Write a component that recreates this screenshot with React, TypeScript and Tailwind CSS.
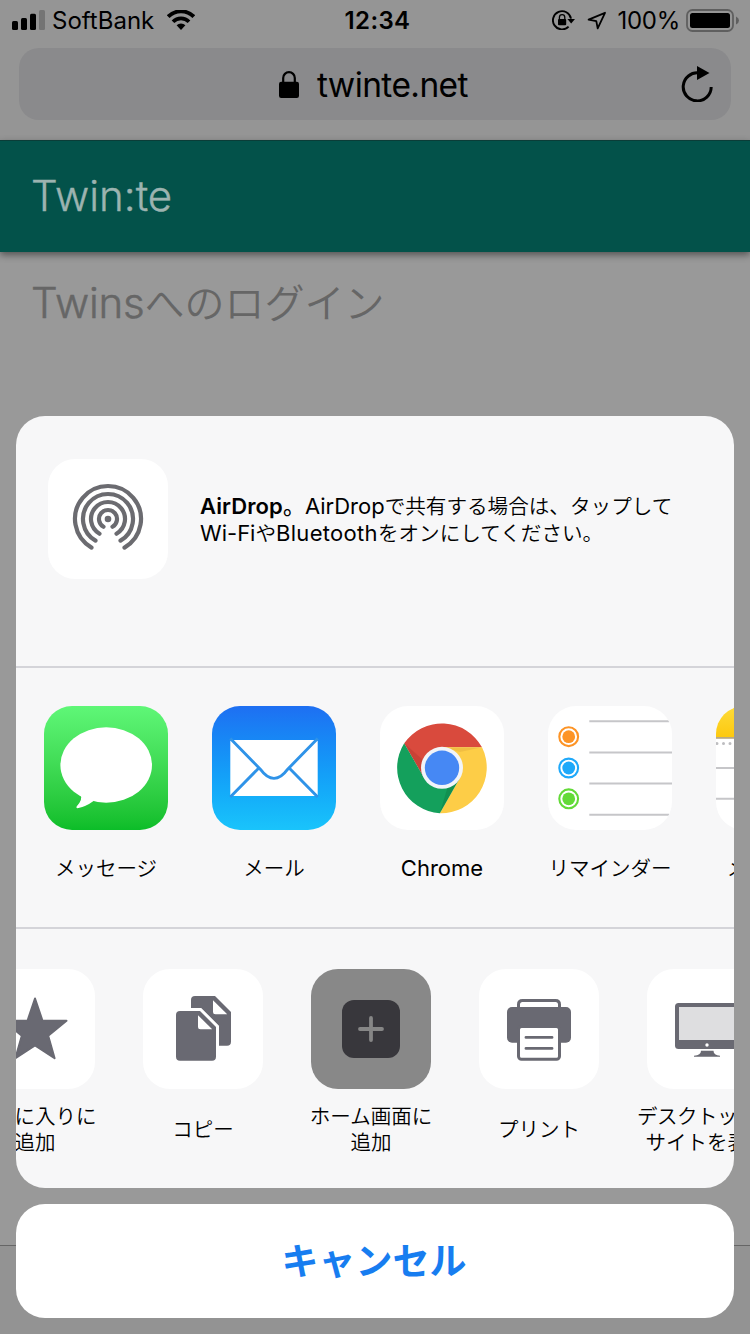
import type { ReactNode } from "react";

const ICON = "#696972";

function StatusBar() {
  return (
    <div className="flex h-10 items-center justify-between">
      <div className="flex w-[250px] items-center">
        <svg className="ml-3 h-5 w-[33px]" viewBox="0 0 33 20">
          <rect x="0" y="11" width="6" height="9" rx="1.5" />
          <rect x="9" y="8" width="6" height="12" rx="1.5" />
          <rect x="18" y="3.7" width="6" height="16.3" rx="1.5" />
          <rect x="27" y="0" width="6" height="20" rx="1.5" fill="#747474" />
        </svg>
        <span className="ml-[7px] pt-[2px] text-[24px] leading-10">SoftBank</span>
        <svg className="ml-[13px] h-5 w-7" viewBox="0 0 28 20">
          <path d="M1.2 6.6 A18 18 0 0 1 26.8 6.6" fill="none" stroke="#000" strokeWidth="3.8" />
          <path d="M6 11.8 A11.2 11.2 0 0 1 22 11.8" fill="none" stroke="#000" strokeWidth="3.7" />
          <path d="M9.6 15.2 A6.4 6.4 0 0 1 18.4 15.2 L14 20 Z" />
        </svg>
      </div>
      <span className="pt-[2px] pl-[5px] text-[24px] leading-10 font-semibold tracking-[0.4px]">12:34</span>
      <div className="flex w-[250px] items-center justify-end">
        <svg className="h-5 w-[23px]" viewBox="0 0 23 20">
          <path d="M16.6 16.6 A9.1 9.1 0 1 1 19 8.6" fill="none" stroke="#000" strokeWidth="1.9" />
          <path d="M15.4 9 H23 L19.2 13.4 Z" />
          <rect x="6" y="9" width="8.2" height="6.2" rx="1" />
          <path d="M7.4 9.5 V7.4 A2.7 2.7 0 0 1 12.8 7.4 V9.5" fill="none" stroke="#000" strokeWidth="1.3" />
        </svg>
        <svg className="ml-3 h-5 w-5" viewBox="0 0 20 20">
          <path d="M1.6 9.6 L18 2.8 L10.7 18.4 L9.3 11.2 Z" fill="none" stroke="#000" strokeWidth="1.8" strokeLinejoin="round" />
        </svg>
        <span className="ml-[11px] pt-[2px] text-[24px] leading-10 tracking-[-0.3px]">100%</span>
        <svg className="mr-[11px] ml-[6px] h-[23px] w-[53px]" viewBox="0 0 53 23">
          <rect x="1" y="1" width="46" height="21" rx="5.5" fill="none" stroke="#5f5f5f" strokeWidth="1.8" />
          <rect x="4" y="4" width="40" height="15" rx="2.5" />
          <path d="M50 7.5 Q53 9 53 11.5 T50 15.5 Z" fill="#5f5f5f" />
        </svg>
      </div>
    </div>
  );
}

function AddressBar() {
  return (
    <div className="mx-[19px] mt-2 flex h-[72px] items-center rounded-[20px] bg-[#8a8a8c]">
      <svg className="ml-[260px] h-[27px] w-5" viewBox="0 0 20 27">
        <rect x="0" y="10.7" width="20" height="16.3" rx="2.2" />
        <path d="M4.2 12 V7 A5.8 5.8 0 0 1 15.8 7 V12" fill="none" stroke="#000" strokeWidth="2.2" />
      </svg>
      <span className="ml-[18px] flex-1 pt-px text-[33.5px] leading-10 tracking-[-0.6px]">twinte.net</span>
      <svg className="mr-[18px] h-9 w-8" viewBox="0 0 32 36">
        <path d="M18 7 A14 14 0 1 0 30.2 21" fill="none" stroke="#000" strokeWidth="3" />
        <path d="M16 0 L28.5 7 L16 14 Z" />
      </svg>
    </div>
  );
}

function AirDropIcon() {
  const radii = [9, 17, 25, 33];
  return (
    <svg className="h-[120px] w-[120px]" viewBox="0 0 120 120">
      {radii.map((r) => (
        <path
          key={r}
          d={`M${60 - r * 0.5} ${60 + r * 0.866} A${r} ${r} 0 1 1 ${60 + r * 0.5} ${60 + r * 0.866}`}
          fill="none"
          stroke="#6b6b70"
          strokeWidth="4.2"
          strokeLinecap="round"
        />
      ))}
      <circle cx="60" cy="60" r="3.3" fill="#6b6b70" />
    </svg>
  );
}

function MessagesIcon() {
  return (
    <svg viewBox="0 0 124 124">
      <ellipse cx="62.2" cy="59" rx="45.8" ry="37.7" fill="#fff" />
      <path d="M36 88 Q39.5 93 32.6 100.5 Q31.6 102.6 34.5 102 Q42 100.5 49.5 95 L52 88 Z" fill="#fff" />
    </svg>
  );
}

function MailIcon() {
  return (
    <svg viewBox="0 0 124 124">
      <rect x="18.3" y="34" width="87.4" height="56" rx="1.5" fill="#fff" />
      <g fill="none" stroke="#2f93e8" strokeWidth="2.9">
        <path d="M18.3 32.5 L48.5 63.4 Q55 72.4 62 72.4 T75.5 63.4 L105.7 32.5" />
        <path d="M18.3 91 L46.6 62.3 M105.7 91 L77.4 62.3" />
      </g>
    </svg>
  );
}

function ChromeIcon() {
  return (
    <svg viewBox="0 0 124 124">
      <path d="M24.2 37.3 A45.7 45.7 0 0 1 102 41.3 H62 L44.2 72 Z" fill="#d94a3d" />
      <path d="M102 41.3 A45.7 45.7 0 0 1 59.8 107.3 L79.8 72 L62 41.3 Z" fill="#fdcd47" />
      <path d="M59.8 107.3 A45.7 45.7 0 0 1 24.2 37.3 L44.2 72 L79.8 72 Z" fill="#14a05c" />
      <path d="M62 41.3 H102 L80 46 Z" fill="#e9b440" opacity="0.6" />
      <path d="M24.2 37.3 L44.2 72 L43 54 Z" fill="#b93a30" opacity="0.5" />
      <path d="M79.8 72 L59.8 107.3 L68 80 Z" fill="#0d7f43" opacity="0.5" />
      <circle cx="62" cy="61.8" r="21" fill="#f2f4f8" />
      <circle cx="62" cy="61.8" r="17.2" fill="#4688f4" />
    </svg>
  );
}

function RemindersIcon() {
  const dots = [
    { y: 30.7, color: "#fd9426" },
    { y: 62, color: "#1fa9fa" },
    { y: 92.8, color: "#63da38" },
  ];
  return (
    <svg viewBox="0 0 124 124">
      {dots.map((dot) => (
        <g key={dot.y}>
          <circle cx="20.7" cy={dot.y} r="9.4" fill="none" stroke={dot.color} strokeWidth="2.1" />
          <circle cx="20.7" cy={dot.y} r="6.4" fill={dot.color} />
        </g>
      ))}
      <path d="M41.3 15.3 H121 M41.3 46.4 H124 M41.3 77.6 H124 M41.3 108.7 H121" stroke="#c6c6c9" strokeWidth="2" />
    </svg>
  );
}

function NotesIcon() {
  return (
    <svg viewBox="0 0 124 124">
      <defs>
        <linearGradient id="notes" x1="0" y1="0" x2="0" y2="1">
          <stop offset="0" stopColor="#fddb3a" />
          <stop offset="1" stopColor="#fdc90f" />
        </linearGradient>
      </defs>
      <rect width="124" height="31" fill="url(#notes)" />
      <rect y="31" width="124" height="1.8" fill="#b9aa83" />
      <path d="M1 37.5 H124" stroke="#bdbdc0" strokeWidth="3" strokeDasharray="0 6.5" strokeLinecap="round" />
      <path d="M0 62 H124 M0 92.8 H124" stroke="#c6c6c9" strokeWidth="2" />
    </svg>
  );
}

function StarIcon() {
  return (
    <svg viewBox="0 0 120 120">
      <path
        d="M60 29.5 L67.5 51.7 H91.5 L73.2 66.7 L79.6 89.2 L60 76.4 L40.4 89.2 L46.8 66.7 L28.5 51.7 H52.5 Z"
        fill={ICON}
        stroke={ICON}
        strokeWidth="2"
        strokeLinejoin="round"
      />
    </svg>
  );
}

function CopyIcon() {
  const page = "M37 42 H57 L73 58 V87.7 Q73 91.7 69 91.7 H37 Q33 91.7 33 87.7 V46 Q33 42 37 42 Z";
  const fold = "M55 46.2 L69.2 60.2 H57.5 Q55 60.2 55 57.7 Z";
  return (
    <svg viewBox="0 0 120 120">
      <g transform="translate(15 -15)">
        <path d={page} fill={ICON} />
        <path d={fold} fill="#fff" />
      </g>
      <path d={page} fill={ICON} stroke="#fff" strokeWidth="6" />
      <path d={page} fill={ICON} />
      <path d={fold} fill="#fff" />
    </svg>
  );
}

function AddIcon() {
  return (
    <svg viewBox="0 0 120 120">
      <rect x="31" y="31" width="58" height="58" rx="12" fill="#38373c" />
      <path d="M49 60 H71 M60 49 V71" stroke="#868686" strokeWidth="3.8" strokeLinecap="round" />
    </svg>
  );
}

function PrintIcon() {
  return (
    <svg viewBox="0 0 120 120">
      <path d="M39.5 40 V35.5 Q39.5 31.5 43.5 31.5 H76.5 Q80.5 31.5 80.5 35.5 V40" fill="none" stroke={ICON} strokeWidth="3" />
      <rect x="28" y="38" width="64" height="35.8" rx="5" fill={ICON} />
      <rect x="39.5" y="57.5" width="41" height="32.7" rx="3" fill="#fff" stroke={ICON} strokeWidth="3" />
      <path d="M47 68.4 H73 M47 79.4 H73" stroke={ICON} strokeWidth="2.9" strokeLinecap="round" />
    </svg>
  );
}

function DesktopIcon() {
  return (
    <svg viewBox="0 0 120 120">
      <rect x="28" y="34" width="64" height="46" rx="3.5" fill={ICON} />
      <rect x="32" y="38" width="56" height="33" fill="#dedee0" />
      <ellipse cx="60" cy="76" rx="1.7" ry="1.8" fill="#fff" />
      <path d="M54 81.7 H66.5 Q66.5 86 73 86.8 V87.8 H47 V86.8 Q54 86 54 81.7 Z" fill={ICON} />
    </svg>
  );
}

const apps: { label: string; tile: string; text: string; icon: ReactNode }[] = [
  { label: "メッセージ", tile: "bg-linear-to-b from-[#5ff777] to-[#0bbd28]", text: "text-[20.5px]", icon: <MessagesIcon /> },
  { label: "メール", tile: "bg-linear-to-b from-[#1e6ff2] to-[#1ac4fb]", text: "text-[20.5px]", icon: <MailIcon /> },
  { label: "Chrome", tile: "bg-white", text: "text-[22px] font-normal -translate-y-px", icon: <ChromeIcon /> },
  { label: "リマインダー", tile: "bg-white", text: "text-[20.5px]", icon: <RemindersIcon /> },
  { label: "メモに追加", tile: "bg-white", text: "text-[20.5px]", icon: <NotesIcon /> },
];

const actions: { lines: string[]; tile: string; icon: ReactNode }[] = [
  { lines: ["お気に入りに", "追加"], tile: "bg-white", icon: <StarIcon /> },
  { lines: ["コピー"], tile: "bg-white", icon: <CopyIcon /> },
  { lines: ["ホーム画面に", "追加"], tile: "bg-[#888888]", icon: <AddIcon /> },
  { lines: ["プリント"], tile: "bg-white", icon: <PrintIcon /> },
  { lines: ["デスクトップ用", "サイトを表示"], tile: "bg-white", icon: <DesktopIcon /> },
];

function ShareSheet() {
  return (
    <div className="absolute inset-x-4 top-[416px] flex flex-col gap-4">
      <div className="flex h-[772px] flex-col overflow-hidden rounded-[29px] bg-[#f7f7f8] font-[350]">
        <div className="flex h-[250px] shrink-0 pt-[43px] pl-8">
          <div className="h-[120px] w-[120px] shrink-0 rounded-[27px] bg-white">
            <AirDropIcon />
          </div>
          <p className="mt-[34px] ml-8 text-[20.6px] leading-[27px] whitespace-nowrap">
            <span className="text-[22px] font-semibold tracking-[0.1px]">AirDrop</span>
            <span className="text-[22px] font-medium">。</span>
            <span className="text-[22px] font-normal">AirDrop</span>で共有する場合は、タップして
            <br />
            <span className="text-[22px] font-normal">Wi-Fi</span>や<span className="text-[22px] font-normal tracking-[0.3px]">Bluetooth</span>をオンにしてください。
          </p>
        </div>
        <div className="flex h-[261px] shrink-0 gap-11 border-t-2 border-[#d4d4d9] pt-[38px] pl-7">
          {apps.map((app) => (
            <div key={app.label} className="flex w-[124px] shrink-0 flex-col items-center">
              <div className={`h-[124px] w-[124px] overflow-hidden rounded-[28px] ${app.tile}`}>{app.icon}</div>
              <span className={`mt-[26px] leading-[26px] whitespace-nowrap ${app.text}`}>{app.label}</span>
            </div>
          ))}
        </div>
        <div className="-ml-[41px] flex h-[261px] shrink-0 gap-12 border-t-2 border-[#d4d4d9] pt-10">
          {actions.map((action) => (
            <div key={action.lines[0]} className="flex w-[120px] shrink-0 flex-col items-center">
              <div className={`h-[120px] w-[120px] overflow-hidden rounded-[27px] ${action.tile}`}>{action.icon}</div>
              <div className="mt-[15px] flex h-[52px] flex-col items-center justify-center text-[20.5px] leading-[26px] whitespace-nowrap">
                {action.lines.map((line) => (
                  <span key={line} className={line.length > 6 ? "tracking-[-0.5px]" : ""}>
                    {line}
                  </span>
                ))}
              </div>
            </div>
          ))}
        </div>
      </div>
      <button className="h-[114px] rounded-[29px] bg-white pt-[2px] pr-[2px] text-[37px] font-bold text-[#177df0]">キャンセル</button>
    </div>
  );
}

export default function App() {
  return (
    <div className="relative flex h-[1334px] w-[750px] flex-col overflow-hidden bg-[#999999] font-['Inter','Noto_Sans_CJK_JP',sans-serif] text-black">
      <div className="h-[140px] shrink-0 bg-[#959595]">
        <StatusBar />
        <AddressBar />
      </div>
      <header className="flex h-28 shrink-0 items-center border-t border-[#0b3d38] bg-[#03524a] pb-[3px] pl-[31px] text-[42px] font-[350] text-[#9cb3b0] shadow-[0_3px_7px_rgba(0,0,0,0.45)] [-webkit-text-stroke:0.4px_#9cb3b0]">
        Twin:te
      </header>
      <main className="flex-1 pt-[21px] pl-[31px] text-[40px] leading-[60px] font-[350] text-[#666666]">
        <span className="text-[42px] tracking-[-0.2px] [-webkit-text-stroke:0.5px_#666666]">Twins</span>へのログイン
      </main>
      <footer className="h-[89px] border-t border-[#666666] bg-[#939393]" />
      <ShareSheet />
    </div>
  );
}
